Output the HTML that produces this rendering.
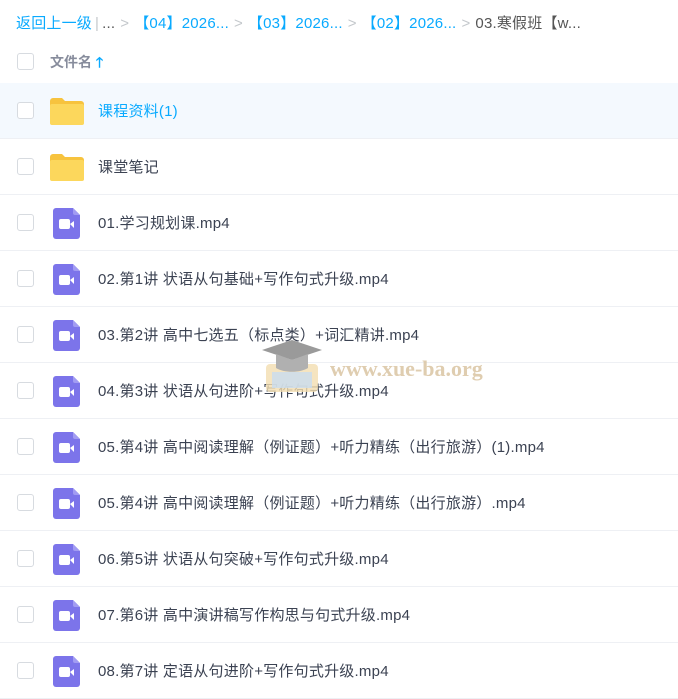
<!DOCTYPE html>
<html><head><meta charset="utf-8"><style>
*{margin:0;padding:0;box-sizing:border-box}
body{width:678px;height:696px;overflow:hidden;background:#fff;font-family:"Liberation Sans","Noto Sans CJK SC",sans-serif;position:relative}
.bc{position:absolute;top:12px;left:16px;font-size:15px;color:#555;white-space:nowrap;letter-spacing:0.2px}
.bc .b{color:#09aaff}.bc .g{color:#c4c8cc;margin:0 5px}
.hd{position:absolute;top:40px;left:0;width:678px;height:44px;border-bottom:1px solid #e6ebf3}
.cb{position:absolute;left:17px;width:17px;height:17px;border:1px solid #d7dbe0;border-radius:3px;background:#fff}
.hd .cb{top:13px}
.hd .t{position:absolute;left:50px;top:12px;font-size:14px;color:#878c9c;font-weight:bold}
.row{position:absolute;left:0;width:678px;height:56px;border-bottom:1px solid #eef0f4}
.row .cb{top:19px}
.row .n{position:absolute;left:98px;top:17px;font-size:15px;color:#3b4252;white-space:nowrap;letter-spacing:0.22px}
.row.sel{background:#f4f9fe}.row.sel .n{color:#09aaff}
.fd{position:absolute;left:50px;top:15px}
.vd{position:absolute;left:53px;top:13px}
.wm{position:absolute;left:262px;top:338px}
</style></head><body>
<div class="bc"><span class="b">返回上一级</span><span class="g" style="margin:0 3px">|</span>...<span class="g">&gt;</span><span class="b">【04】2026...</span><span class="g">&gt;</span><span class="b">【03】2026...</span><span class="g">&gt;</span><span class="b">【02】2026...</span><span class="g">&gt;</span>03.寒假班【w...</div>
<div class="hd"><div class="cb"></div><div class="t">文件名 <span style="color:#09aaff">🡑</span></div></div>
<div id="rows"></div>
<script>
var names=[["课程资料(1)",1],["课堂笔记",1],["01.学习规划课.mp4"],["02.第1讲 状语从句基础+写作句式升级.mp4"],["03.第2讲 高中七选五（标点类）+词汇精讲.mp4"],["04.第3讲 状语从句进阶+写作句式升级.mp4"],["05.第4讲 高中阅读理解（例证题）+听力精练（出行旅游）(1).mp4"],["05.第4讲 高中阅读理解（例证题）+听力精练（出行旅游）.mp4"],["06.第5讲 状语从句突破+写作句式升级.mp4"],["07.第6讲 高中演讲稿写作构思与句式升级.mp4"],["08.第7讲 定语从句进阶+写作句式升级.mp4"]];
var fold='<svg class="fd" width="34" height="27" viewBox="0 0 34 27"><path d="M0 3a3 3 0 0 1 3-3h9l3 3h16a3 3 0 0 1 3 3v18a3 3 0 0 1-3 3H3a3 3 0 0 1-3-3z" fill="#f7c33e"/><rect x="0" y="6" width="34" height="21" rx="2" fill="#fcd75c"/></svg>';
var vid='<svg class="vd" width="27" height="31" viewBox="0 0 27 31"><path d="M3 0h17l7 7v21a3 3 0 0 1-3 3H3a3 3 0 0 1-3-3V3a3 3 0 0 1 3-3z" fill="#7c74ea"/><path d="M20 0l7 7h-5a2 2 0 0 1-2-2z" fill="#a29cf2"/><rect x="6" y="11" width="11" height="10" rx="2" fill="#fff"/><path d="M17 16l4-3v7z" fill="#fff"/></svg>';
var h='';
names.forEach(function(r,i){h+='<div class="row'+(i==0?' sel':'')+'" style="top:'+(83+i*56)+'px"><div class="cb"></div>'+(r[1]?fold:vid)+'<div class="n">'+r[0]+'</div></div>';});
document.getElementById('rows').innerHTML=h;
</script>
<div class="wm"><svg width="60" height="60" viewBox="0 0 60 60"><rect x="4" y="26" width="52" height="28" rx="4" fill="#f2ddb0" opacity=".8"/><rect x="10" y="34" width="40" height="16" fill="#c9dcef" opacity=".8"/><path d="M0 12L30 2 60 12 30 22z" fill="#9a9a9a"/><path d="M14 16v14c8 5 24 5 32 0V16L30 22z" fill="#b0b0b0"/></svg></div>
<div style="position:absolute;left:330px;top:356px;font-family:'Liberation Serif',serif;font-weight:bold;font-size:22px;color:#dcc8a8;opacity:.9">www.xue-ba.org</div>
</body></html>
